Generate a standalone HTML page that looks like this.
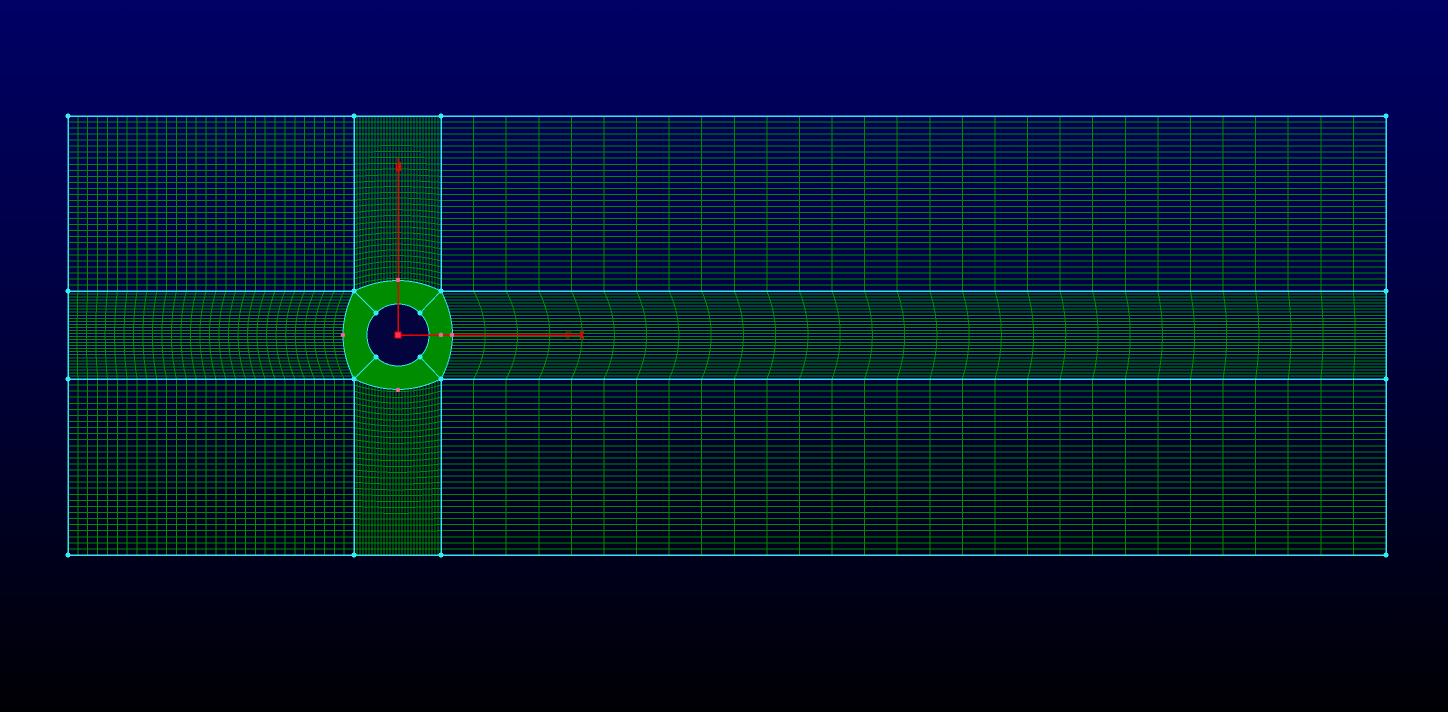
<!DOCTYPE html>
<html><head><meta charset="utf-8"><style>
html,body{margin:0;padding:0;width:1448px;height:712px;overflow:hidden;background:#000}
svg{display:block}
</style></head><body>
<svg id="s" width="1448" height="712" xmlns="http://www.w3.org/2000/svg" shape-rendering="crispEdges">
<defs><linearGradient id="bg" x1="0" y1="0" x2="0" y2="1">
<stop offset="0" stop-color="#000066"/><stop offset="0.5" stop-color="#00003a"/><stop offset="1" stop-color="#000004"/></linearGradient></defs>
<rect width="1448" height="712" fill="url(#bg)"/>
<g id="mesh" fill="none" stroke="#008a00" stroke-width="1"></g>
<g id="top"></g>
</svg>
<script>
var m=document.getElementById('mesh'),t=document.getElementById('top'),NS='http://www.w3.org/2000/svg';
function el(p,tag,a){var e=document.createElementNS(NS,tag);for(var k in a)e.setAttribute(k,a[k]);p.appendChild(e);return e;}
var X0=68,X1=354,X2=441,X3=1386,Y0=116,Y1=291,Y2=379,Y3=555,cx=398,cy=335;
function line(x1,y1,x2,y2){el(m,'line',{x1:x1,y1:y1,x2:x2,y2:y2});}
function quad(x1,y1,qx,qy,x2,y2){el(m,'path',{d:'M'+x1+' '+y1+'Q'+qx+' '+qy+' '+x2+' '+y2});}
var i,x,y,n=29;
for(i=1;i<n;i++){x=X0+(X1-X0)*i/n;
 line(x,Y0,x,Y1);line(x,Y2,x,Y3);
 var b=-11*Math.pow(i/n,0.8);quad(x,Y1,x+2*b,cy,x,Y2);}
for(i=1;i<n;i++){x=X2+(X3-X2)*i/n;
 line(x,Y0,x,Y1);line(x,Y2,x,Y3);
 var b=11*Math.pow(1-i/n,0.8)+1;quad(x,Y1,x+2*b,cy,x,Y2);}
for(i=1;i<n;i++){x=X1+(X2-X1)*i/n;line(x,Y0,x,Y1);line(x,Y2,x,Y3);}
for(i=1;i<n;i++){y=Y0+(Y1-Y0)*i/n;line(X0,y,X1,y);line(X2,y,X3,y);
 var b=-7*Math.pow(i/n,1.5);quad(X1,y,cx,y+2*b,X2,y);}
for(i=1;i<n;i++){y=Y2+(Y3-Y2)*i/n;line(X0,y,X1,y);line(X2,y,X3,y);
 var b=7*Math.pow(1-i/n,1.5);quad(X1,y,cx,y+2*b,X2,y);}
for(i=1;i<n;i++){y=Y1+(Y2-Y1)*i/n;line(X0,y,X1,y);line(X2,y,X3,y);}
// frame
var fs={fill:'none',stroke:'#33e6ee','stroke-width':1.5};
el(t,'rect',Object.assign({x:X0,y:Y0,width:X3-X0,height:Y3-Y0},fs));
el(t,'line',Object.assign({x1:X0,y1:Y1,x2:X3,y2:Y1},fs));
el(t,'line',Object.assign({x1:X0,y1:Y2,x2:X3,y2:Y2},fs));
el(t,'line',Object.assign({x1:X1,y1:Y0,x2:X1,y2:Y3},fs));
el(t,'line',Object.assign({x1:X2,y1:Y0,x2:X2,y2:Y3},fs));
// ring on top of frame
el(t,'path',{d:'M354 291Q398 270 441 291Q464 335 441 379Q398 400 354 379Q332 335 354 291Z',fill:'#008c00',stroke:'#33e6ee','stroke-width':1});
el(t,'circle',{cx:cx,cy:cy,r:31,fill:'#03033e',stroke:'#33e6ee','stroke-width':1});
[[354,291,376,313],[441,291,420,313],[354,379,376,357],[441,379,420,357]].forEach(function(c){el(t,'line',{x1:c[0],y1:c[1],x2:c[2],y2:c[3],stroke:'#33e6ee','stroke-width':1});});
// red axes
el(t,'line',{x1:cx,y1:cy,x2:cx,y2:158,stroke:'#ee0000','stroke-width':1.5});
el(t,'line',{x1:cx,y1:cy,x2:582,y2:cy,stroke:'#ee0000','stroke-width':1.5});
el(t,'path',{d:'M396 170h4v-8M396 170v-6',fill:'none',stroke:'#ee0000','stroke-width':1.5});
el(t,'path',{d:'M566 338v-6h6M566 338h4M580 331l4 8M584 331l-4 8',fill:'none',stroke:'#ee0000','stroke-width':1.2});
el(t,'rect',{x:395,y:332,width:6,height:6,fill:'#ff3355',stroke:'#ee0000'});
[[X0,Y0],[X1,Y0],[X2,Y0],[X3,Y0],[X0,Y1],[X3,Y1],[X0,Y2],[X3,Y2],[X0,Y3],[X1,Y3],[X2,Y3],[X3,Y3],[X1,Y1],[X2,Y1],[X1,Y2],[X2,Y2],[376,313],[420,313],[376,357],[420,357]].forEach(function(p){el(t,'circle',{cx:p[0],cy:p[1],r:2.5,fill:'#33eef0'});});
[[398,280],[398,390],[343,335],[441,335],[452,335]].forEach(function(p){el(t,'circle',{cx:p[0],cy:p[1],r:2.3,fill:'#ee6699'});});
</script>
</body></html>
